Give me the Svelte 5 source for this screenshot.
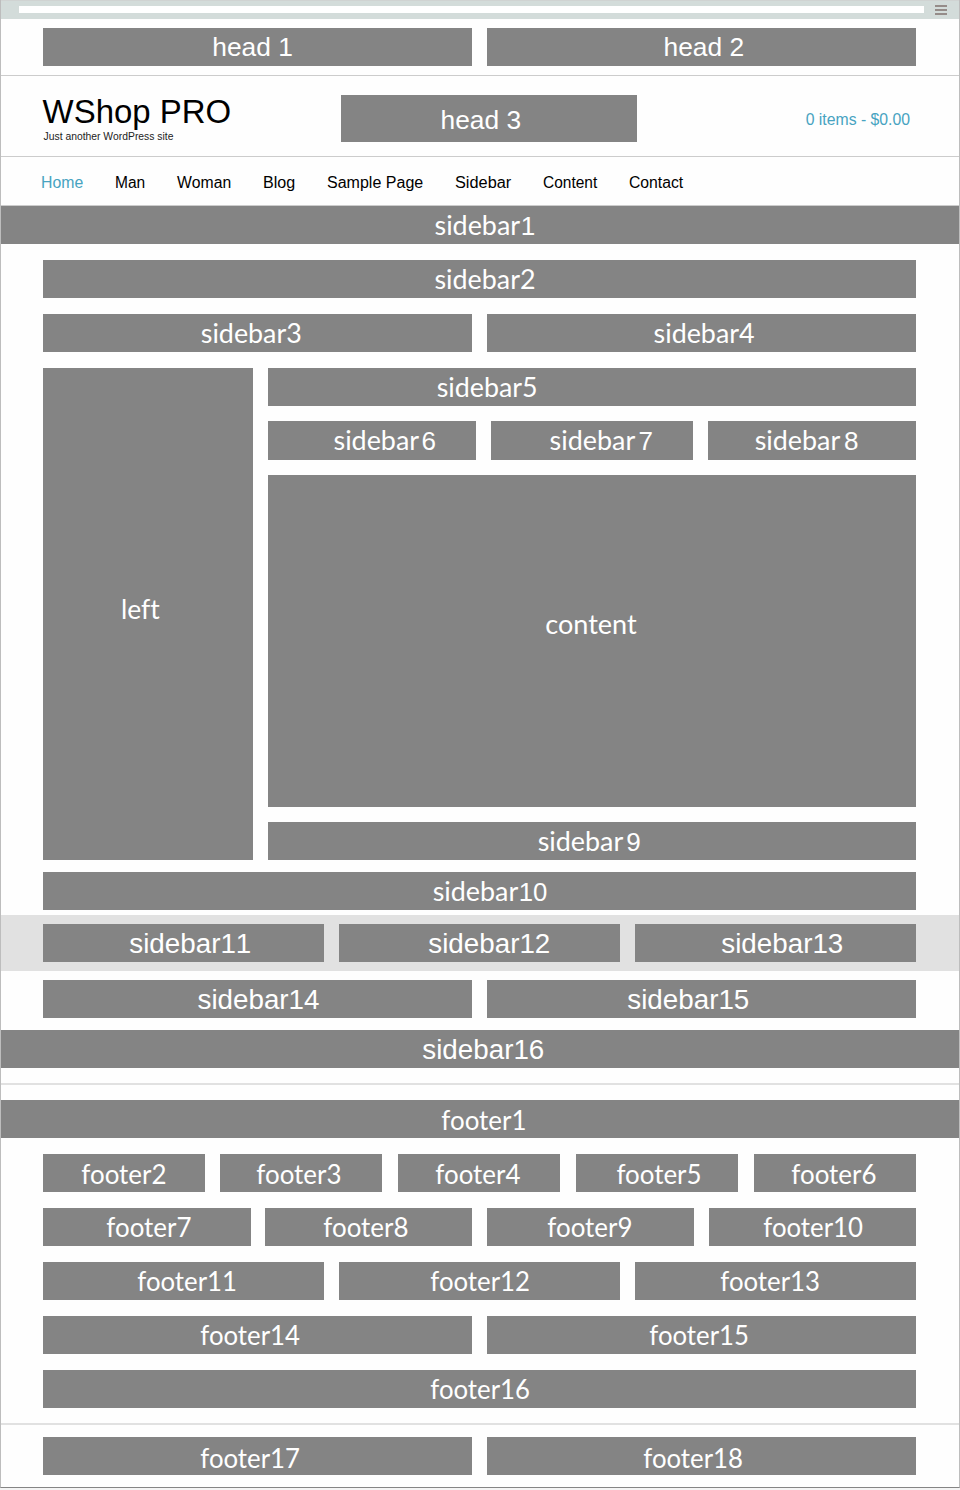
<script>
  // Label builders: each run is { t: text, x: start, w: advance width, f: font class }
  const side = (n, x) => [{ t: 'sidebar' + n, x, w: 101, f: 'humanist' }];
  const sideDigit = (n, x, dx, w = 14.5) => [
    { t: 'sidebar', x, w: 85.6, f: 'humanist' },
    { t: String(n), x: dx, w, f: 'digit' }
  ];
  const sideSans = (n, x) => [{ t: 'sidebar' + n, x, w: 122, f: 'sans' }];
  const foot = (n, x) => [{ t: 'footer' + n, x, w: n > 9 ? 99.6 : 85.2, f: 'humanist' }];
  const head = (n, x) => [{ t: 'head ' + n, x, w: 80.6, f: 'head' }];

  const box = (l, r, runs, h = 38, y = 29) => ({ l, w: r - l, h, y, runs });

  const heads = [box(43, 472, head(1, 212.3), 38, 27.8), box(487, 916, head(2, 663.5), 38, 27.8)];
  const head3 = box(341, 636.6, head(3, 440.5), 47, 33.8);

  const s1 = box(1, 959, sideDigit(1, 434.5, 520.7));
  const s2 = box(43, 916, side(2, 434.5));
  const s34 = [box(43, 472, side(3, 200.8)), box(487, 916, side(4, 653.6))];
  const left = box(43, 253, [{ t: 'left', x: 121, w: 38.8, f: 'humanist' }], 492, 250.5);
  const s5 = box(268, 916, side(5, 436.7), 38, 28.7);
  const s678 = [
    box(268, 476, sideDigit(6, 333.5, 421.6), 39, 28.7),
    box(491, 693, sideDigit(7, 549.6, 638.4), 39, 28.7),
    box(708, 916, sideDigit(8, 754.7, 844), 39, 28.7)
  ];
  const content = box(268, 916, [{ t: 'content', x: 545.3, w: 91.4, f: 'humanist' }], 332, 158.5);
  const s9 = box(268, 916, sideDigit(9, 537.7, 626.3));
  const s10 = box(43, 916, sideDigit(10, 432.7, 518.7, 28.6));
  const band = [
    box(43, 324, sideSans(11, 129.3)),
    box(339, 620, sideSans(12, 428.3)),
    box(635, 916, sideSans(13, 721.3))
  ];
  const s1415 = [box(43, 472, sideSans(14, 197.5)), box(487, 916, sideSans(15, 627.3))];
  const s16 = box(1, 959, sideSans(16, 422.3));

  const f1 = box(1, 959, foot(1, 441.3), 38, 29.8);
  const footerRows = [
    [
      box(43, 205, foot(2, 81.3), 38, 30),
      box(220, 382, foot(3, 256.3), 38, 30),
      box(398, 560, foot(4, 435.3), 38, 30),
      box(576, 738, foot(5, 616.4), 38, 30),
      box(754, 916, foot(6, 791.3), 38, 30)
    ],
    [
      box(43, 251, foot(7, 106.3)),
      box(265, 472, foot(8, 323.3)),
      box(487, 694, foot(9, 547.3)),
      box(709, 916, foot(10, 763.3))
    ],
    [box(43, 324, foot(11, 137.3)), box(339, 620, foot(12, 430.3)), box(635, 916, foot(13, 720.3))],
    [box(43, 472, foot(14, 200.3)), box(487, 916, foot(15, 649.3))],
    [box(43, 916, foot(16, 430.3))]
  ];
  const bottom = [box(43, 472, foot(17, 200.3), 38, 31), box(487, 916, foot(18, 643.3), 38, 31)];

  const nav = [
    ['Home', 42],
    ['Man', 30],
    ['Woman', 54],
    ['Blog', 32],
    ['Sample Page', 96],
    ['Sidebar', 56],
    ['Content', 54],
    ['Contact', 54]
  ];
</script>

{#snippet block(b)}
  <svg class="block" width={b.w} height={b.h} viewBox="{b.l} 0 {b.w} {b.h}">
    {#each b.runs as r}
      <text class={r.f} x={r.x} y={b.y} textLength={r.w} lengthAdjust="spacingAndGlyphs">{r.t}</text>
    {/each}
  </svg>
{/snippet}

{#snippet row(items)}
  <div class="row">
    {#each items as b, i}
      <div style:margin-left="{i ? b.l - items[i - 1].l - items[i - 1].w : 0}px">{@render block(b)}</div>
    {/each}
  </div>
{/snippet}

<div class="page">
  <div class="chrome">
    <div class="address"></div>
    <div class="menu"><i></i><i></i><i></i></div>
  </div>

  <div class="top">{@render row(heads)}</div>

  <header>
    <svg class="brand" width="200" height="52" viewBox="42 95 200 52">
      <text class="title" x="42.6" y="123" textLength="188.6" lengthAdjust="spacingAndGlyphs">WShop PRO</text>
      <text class="tagline" x="43.6" y="140.2" textLength="129.8" lengthAdjust="spacingAndGlyphs">Just another WordPress site</text>
    </svg>
    {@render block(head3)}
    <svg class="cart" width="106" height="47" viewBox="805 95 106 47">
      <text x="805.7" y="125" textLength="104.3" lengthAdjust="spacingAndGlyphs">0 items - $0.00</text>
    </svg>
  </header>

  <nav>
    {#each nav as [name, w], i}
      <svg class:active={i === 0} width={w} height="48">
        <text x="0" y="31" textLength={w + 0.2} lengthAdjust="spacingAndGlyphs">{name}</text>
      </svg>
    {/each}
  </nav>

  {@render block(s1)}

  <main>
    {@render block(s2)}
    {@render row(s34)}
    <div class="columns">
      {@render block(left)}
      <div class="center">
        {@render block(s5)}
        {@render row(s678)}
        {@render block(content)}
        {@render block(s9)}
      </div>
    </div>
  </main>

  <div class="wide">{@render block(s10)}</div>
  <div class="band">{@render row(band)}</div>
  <div class="pair">{@render row(s1415)}</div>
  {@render block(s16)}
  <div class="rule"></div>

  {@render block(f1)}
  <footer>
    {#each footerRows as items}{@render row(items)}{/each}
  </footer>
  <div class="rule last"></div>
  <div class="bottom">{@render row(bottom)}</div>
</div>

<style>
  :global(body) {
    background: #f4f4f4;
  }
  .page {
    box-sizing: border-box;
    width: 960px;
    height: 1488px;
    border: solid #bdbdbd;
    border-width: 0 1px 1px;
    border-bottom-color: #858585;
    box-shadow: 0 1px 1px #c4c4c4;
    background: #fefefe;
    font-family: 'Liberation Sans', Arial, sans-serif;
  }
  svg {
    display: block;
    flex: none;
    overflow: visible;
    font-kerning: none;
  }
  .block {
    background: #848484;
    fill: #fff;
  }
  .humanist {
    font: 27px Lato, 'Noto Sans', sans-serif;
    font-variant-ligatures: none;
  }
  .digit {
    font-size: 26px;
  }
  .sans {
    font-size: 27px;
  }
  .head {
    font-size: 26px;
  }
  .row {
    display: flex;
  }

  .chrome {
    display: flex;
    box-sizing: border-box;
    height: 19px;
    padding: 5px 12px 0 18px;
    border-top: 1px solid #d0d3d2;
    background: #d3dcda;
  }
  .address {
    width: 905px;
    height: 7px;
    background: #fff;
  }
  .menu {
    display: flex;
    flex-direction: column;
    gap: 2px;
    margin: -1px 0 0 11px;
  }
  .menu i {
    width: 12px;
    height: 2px;
    background: #958c89;
  }
  .top {
    height: 47px;
    padding: 9px 43px 0 42px;
    border-bottom: 1px solid #ccc;
  }
  header {
    display: flex;
    height: 61px;
    padding: 19px 0 0 41px;
    border-bottom: 1px solid #ccc;
  }
  header .block {
    margin-left: 99px;
  }
  .cart {
    margin-left: 168.4px;
    font-size: 16px;
    fill: #47a3c1;
  }
  .title {
    font-size: 33px;
    fill: #000;
  }
  .tagline {
    font-size: 11px;
    fill: #222;
  }
  nav {
    display: flex;
    gap: 32px;
    height: 48px;
    padding-left: 40px;
    border-bottom: 1px solid #ccc;
    font-size: 16px;
  }
  .active {
    fill: #47a3c1;
  }
  main {
    display: flex;
    flex-direction: column;
    gap: 16px;
    padding: 16px 43px 12px 42px;
  }
  .columns {
    display: flex;
    gap: 15px;
  }
  .center {
    display: flex;
    flex-direction: column;
    gap: 15px;
    width: 648px;
  }
  .wide {
    padding: 0 43px 5px 42px;
  }
  .band {
    padding: 9px 43px 9px 42px;
    background: #e1e1e1;
  }
  .pair {
    padding: 9px 43px 12px 42px;
  }
  .rule {
    height: 2px;
    margin: 15px 0;
    background: #e1e1e1;
  }
  .rule.last {
    margin: 15px 0 12px;
  }
  footer {
    display: flex;
    flex-direction: column;
    gap: 16px;
    padding: 16px 43px 0 42px;
  }
  .bottom {
    padding: 0 43px 0 42px;
  }
</style>
